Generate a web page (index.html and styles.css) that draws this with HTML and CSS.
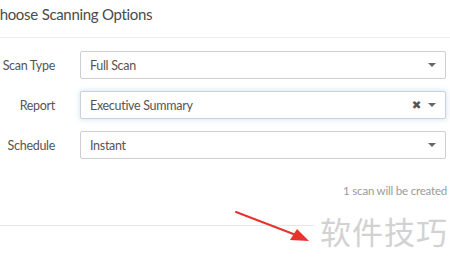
FILE: index.html
```html
<!DOCTYPE html>
<html>
<head>
<meta charset="utf-8">
<link rel="stylesheet" href="styles.css">
</head>
<body>
<div class="page">
  <div class="header">
    <h2 class="title">Choose Scanning Options</h2>
  </div>
  <div class="form">
    <div class="row">
      <label class="label">Scan Type</label>
      <div class="select">
        <span class="value">Full Scan</span>
        <span class="caret"></span>
      </div>
    </div>
    <div class="row">
      <label class="label">Report</label>
      <div class="select focused">
        <span class="value">Executive Summary</span>
        <span class="clear">✖</span>
        <span class="caret"></span>
      </div>
    </div>
    <div class="row">
      <label class="label">Schedule</label>
      <div class="select">
        <span class="value">Instant</span>
        <span class="caret"></span>
      </div>
    </div>
  </div>
  <div class="note">1 scan will be created</div>
  <div class="footer"></div>
  <svg class="arrow" width="90" height="40" viewBox="0 0 90 40">
    <line x1="6" y1="9" x2="66" y2="32" stroke="#e8322d" stroke-width="2" stroke-linecap="round"/>
    <polygon points="79,38 60,37 67,26" fill="#e8322d"/>
  </svg>
  <div class="watermark">软件技巧</div>
</div>
</body>
</html>
```
FILE: styles.css
```css
* { box-sizing: border-box; }
html, body { margin: 0; padding: 0; background: #fff; }
body { width: 450px; height: 264px; overflow: hidden; font-family: "Lato", "Open Sans", sans-serif; color: #555; }
.page { position: relative; width: 450px; height: 264px; }
.header { height: 38px; border-bottom: 1px solid #ececec; }
.title { margin: 0; padding: 5px 0 0 0; margin-left: -10px; font-size: 15px; font-weight: 400; color: #4a4a4a; line-height: 19px; letter-spacing: -0.35px; word-spacing: 0.5px; }
.form { padding-top: 13px; display: flex; flex-direction: column; gap: 12px; }
.row { display: flex; align-items: center; }
.label { flex: 0 0 55px; width: 55px; display: flex; justify-content: flex-end; white-space: nowrap; font-size: 12.5px; letter-spacing: -0.3px; color: #555; }
.select { flex: 0 0 366px; margin-left: 25px; width: 366px; height: 28px; border: 1px solid #cfcfcf; border-radius: 2px; display: flex; align-items: center; padding: 0 0 0 9px; font-size: 12.5px; letter-spacing: -0.3px; color: #555; background: #fff; }
.select.focused { border-color: #c8d3de; box-shadow: 0 0 5px 1px rgba(150,190,225,0.35); }
.value { flex: 1; }
.clear { font-size: 11.5px; color: #555; margin-right: 7px; font-family: "DejaVu Sans", sans-serif; }
.caret { width: 0; height: 0; border-left: 4px solid transparent; border-right: 4px solid transparent; border-top: 4px solid #666; margin-right: 9px; }
.note { margin-top: 25px; text-align: right; padding-right: 3px; font-size: 11.5px; letter-spacing: -0.2px; color: #9a9a9a; }
.footer { margin-top: 28px; border-top: 1px solid #e6e6e6; }
.arrow { position: absolute; left: 230px; top: 203px; }
.watermark { position: absolute; left: 314px; top: 208px; width: 136px; height: 46px; background: #fff; font-family: "Noto Sans CJK SC", sans-serif; font-size: 31px; color: #d2d2d2; line-height: 46px; padding-left: 6px; letter-spacing: 1px; }
```
